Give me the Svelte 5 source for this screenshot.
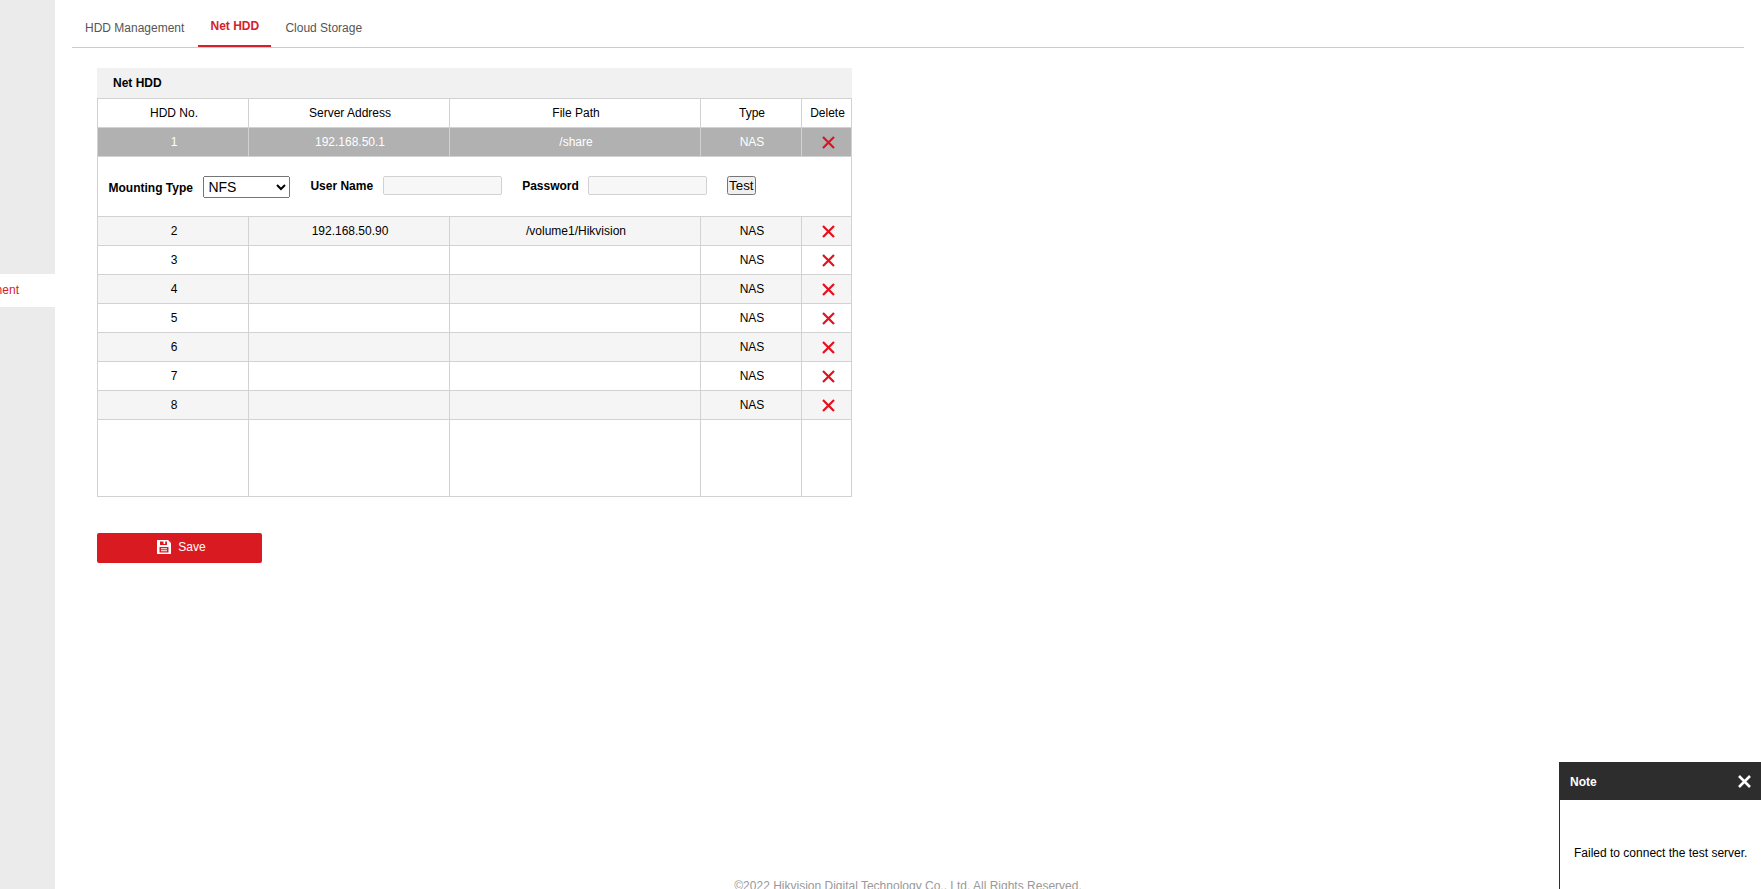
<script>
	const tabs = [
		{ label: 'HDD Management', active: false },
		{ label: 'Net HDD', active: true },
		{ label: 'Cloud Storage', active: false }
	];

	const rows = [
		{ id: 1, address: '192.168.50.1', path: '/share' },
		{ id: 2, address: '192.168.50.90', path: '/volume1/Hikvision' },
		{ id: 3, address: '', path: '' },
		{ id: 4, address: '', path: '' },
		{ id: 5, address: '', path: '' },
		{ id: 6, address: '', path: '' },
		{ id: 7, address: '', path: '' },
		{ id: 8, address: '', path: '' }
	];
</script>

{#snippet deleteIcon()}
	<svg class="delete-icon" width="13" height="13" viewBox="0 0 13 13" aria-hidden="true">
		<path d="M1 1 L12 12 M12 1 L1 12" stroke="#e60f1e" stroke-width="2.2" fill="none" />
	</svg>
{/snippet}

<div class="page">
	<aside class="sidebar">
		<div class="side-item">Management</div>
	</aside>

	<main class="main">
		<nav class="tabs">
			{#each tabs as tab}
				<div class="tab" class:active={tab.active}>{tab.label}</div>
			{/each}
		</nav>

		<section class="content">
			<div class="title">Net HDD</div>
			<table>
				<colgroup>
					<col style="width: 151px" />
					<col style="width: 201px" />
					<col style="width: 251px" />
					<col style="width: 101px" />
					<col style="width: 50px" />
				</colgroup>
				<thead>
					<tr>
						<th>HDD No.</th>
						<th>Server Address</th>
						<th>File Path</th>
						<th>Type</th>
						<th>Delete</th>
					</tr>
				</thead>
				<tbody>
					{#each rows as row}
						<tr class:selected={row.id === 1} class:even={row.id % 2 === 0}>
							<td>{row.id}</td>
							<td>{row.address}</td>
							<td>{row.path}</td>
							<td>NAS</td>
							<td>{@render deleteIcon()}</td>
						</tr>
						{#if row.id === 1}
							<tr class="detail">
								<td colspan="5">
									<div class="form">
										<label class="mount-label" for="mount">Mounting Type</label>
										<select id="mount">
											<option>NFS</option>
										</select>
										<label class="user-label" for="user">User Name</label>
										<input id="user" type="text" />
										<label class="pass-label" for="pass">Password</label>
										<input id="pass" type="text" />
										<button class="test" type="button">Test</button>
									</div>
								</td>
							</tr>
						{/if}
					{/each}
					<tr class="filler">
						<td></td>
						<td></td>
						<td></td>
						<td></td>
						<td></td>
					</tr>
				</tbody>
			</table>

			<button class="save" type="button">
				<svg width="14" height="14" viewBox="0 0 14 14" aria-hidden="true">
					<path
						fill="#fff"
						fill-rule="evenodd"
						d="M0 0 H11 L14 3 V14 H0 Z M3 1.5 V5 H10 V1.5 H8.2 V4 H6.5 V1.5 Z M2.5 7 V12.5 H11.5 V7 Z M4 8.3 H10 V9.3 H4 Z M4 10.3 H10 V11.3 H4 Z"
					/>
				</svg>
				<span>Save</span>
			</button>
		</section>

		<footer class="footer">©2022 Hikvision Digital Technology Co., Ltd. All Rights Reserved.</footer>
	</main>

	<div class="note">
		<div class="note-head">
			<span>Note</span>
			<svg width="13" height="13" viewBox="0 0 13 13" aria-hidden="true">
				<path d="M1 1 L12 12 M12 1 L1 12" stroke="#fff" stroke-width="2.6" fill="none" />
			</svg>
		</div>
		<div class="note-body">Failed to connect the test server.</div>
	</div>
</div>

<style>
	:global(body) {
		overflow: hidden;
	}

	.page {
		position: relative;
		display: flex;
		height: 889px;
		overflow: hidden;
		font-family: 'Liberation Sans', Arial, sans-serif;
		font-size: 12px;
		color: #000;
		background: #fff;
	}

	.sidebar {
		flex: 0 0 55px;
		padding-top: 274px;
		overflow: hidden;
		background: #ebebeb;
	}

	.side-item {
		display: flex;
		justify-content: flex-end;
		align-items: center;
		box-sizing: border-box;
		height: 33px;
		padding: 0 36px 2px 0;
		white-space: nowrap;
		color: #d7202e;
		background: #fff;
	}

	.main {
		flex: 1;
		display: flex;
		flex-direction: column;
		min-width: 0;
	}

	.tabs {
		display: flex;
		height: 47px;
		margin: 0 17px;
		border-bottom: 1px solid #ccc;
	}

	.tab {
		height: 47px;
		padding: 0 13px;
		line-height: 56px;
		color: #555;
	}

	.tab.active {
		box-sizing: border-box;
		width: 73px;
		margin: 0 1px;
		padding: 0;
		border-bottom: 2px solid #d32029;
		text-align: center;
		line-height: 52px;
		font-weight: bold;
		color: #d7202e;
	}

	.content {
		padding: 20px 0 0 42px;
	}

	.title {
		box-sizing: border-box;
		width: 755px;
		height: 30px;
		padding-left: 16px;
		line-height: 30px;
		font-weight: bold;
		background: #f1f1f1;
	}

	table {
		width: 755px;
		table-layout: fixed;
		border-collapse: collapse;
	}

	th,
	td {
		height: 28px;
		padding: 0 0 0 2px;
		border: 1px solid #d2d2d2;
		text-align: center;
		font-weight: normal;
	}

	.even td {
		background: #f5f5f5;
	}

	.selected td {
		color: #fff;
		background: #b1b1b1;
	}

	.delete-icon {
		display: block;
		margin: 1px 0 0 18px;
	}

	.detail td {
		height: 59px;
		padding: 0;
	}

	.form {
		display: flex;
		align-items: flex-start;
		height: 40px;
		padding: 19px 0 0 10.5px;
		font-weight: bold;
	}

	.form label {
		line-height: 19px;
	}

	.mount-label {
		margin: 3px 10.5px 0 0;
	}

	select {
		box-sizing: border-box;
		width: 87px;
		height: 22px;
		font-family: inherit;
		font-size: 14px;
	}

	.user-label {
		margin: 1px 10px 0 20px;
	}

	input {
		box-sizing: border-box;
		width: 119px;
		height: 19px;
		padding: 0 4px;
		border: 1px solid #d2d2d2;
		border-radius: 2px;
		background: #f7f7f7;
	}

	.pass-label {
		margin: 1px 9px 0 20px;
	}

	.test {
		box-sizing: border-box;
		width: 29px;
		height: 19px;
		margin-left: 20px;
		padding: 0;
		font-family: inherit;
		font-size: 13.33px;
	}

	.filler td {
		height: 76px;
	}

	.save {
		display: flex;
		justify-content: center;
		align-items: center;
		gap: 7px;
		box-sizing: border-box;
		width: 165px;
		height: 30px;
		margin-top: 36px;
		padding: 0 0 2px 4px;
		border: none;
		border-radius: 2px;
		font-family: inherit;
		font-size: 12px;
		color: #fff;
		background: #d91a21;
	}

	.footer {
		margin-top: auto;
		height: 11px;
		line-height: 16px;
		text-align: center;
		color: #999;
	}

	.note {
		position: absolute;
		left: 1559px;
		top: 762px;
		box-sizing: border-box;
		width: 202px;
		height: 127px;
		border-left: 1px solid #2d2d2d;
		background: #fff;
	}

	.note-head {
		display: flex;
		justify-content: space-between;
		align-items: center;
		box-sizing: border-box;
		height: 38px;
		padding: 1px 10px 0 10px;
		font-weight: bold;
		color: #fff;
		background: #2d2d2d;
	}

	.note-body {
		padding: 46px 0 0 14px;
		white-space: nowrap;
	}
</style>
